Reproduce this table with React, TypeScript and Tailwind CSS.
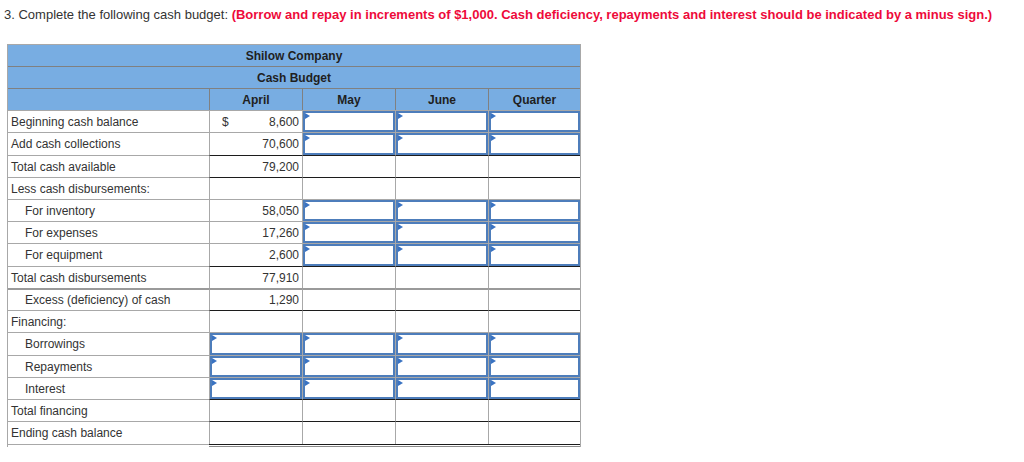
import React from "react";

type Top = "gray" | "black" | "thick";

interface Row {
  label: string;
  indent?: boolean;
  april?: string;
  dollar?: boolean;
  inputs: number; // 3 = May..Quarter, 4 = April..Quarter
  top: Top;
  h: string;
}

const rows: Row[] = [
  { label: "Beginning cash balance", april: "8,600", dollar: true, inputs: 3, top: "gray", h: "h-[22px]" },
  { label: "Add cash collections", april: "70,600", inputs: 3, top: "gray", h: "h-[23px]" },
  { label: "Total cash available", april: "79,200", inputs: 0, top: "black", h: "h-[22px]" },
  { label: "Less cash disbursements:", inputs: 0, top: "black", h: "h-[22px]" },
  { label: "For inventory", indent: true, april: "58,050", inputs: 3, top: "gray", h: "h-[22px]" },
  { label: "For expenses", indent: true, april: "17,260", inputs: 3, top: "gray", h: "h-[22px]" },
  { label: "For equipment", indent: true, april: "2,600", inputs: 3, top: "gray", h: "h-[23px]" },
  { label: "Total cash disbursements", april: "77,910", inputs: 0, top: "black", h: "h-[22px]" },
  { label: "Excess (deficiency) of cash", indent: true, april: "1,290", inputs: 0, top: "thick", h: "h-[22px]" },
  { label: "Financing:", inputs: 0, top: "black", h: "h-[22px]" },
  { label: "Borrowings", indent: true, inputs: 4, top: "gray", h: "h-[23px]" },
  { label: "Repayments", indent: true, inputs: 4, top: "gray", h: "h-[22px]" },
  { label: "Interest", indent: true, inputs: 4, top: "gray", h: "h-[22px]" },
  { label: "Total financing", inputs: 0, top: "black", h: "h-[22px]" },
  { label: "Ending cash balance", inputs: 0, top: "black", h: "h-[23px]" },
];

const numTop: Record<Top, string> = {
  gray: "border-t border-[#a8a8a8]",
  black: "border-t border-[#1c1c1c]",
  thick: "border-t-2 border-[#9a9a9a]",
};

function InputBox() {
  return (
    <div className="relative h-full w-full border-2 border-[#4d7dbb] bg-white">
      <div className="absolute left-0 top-0 h-0 w-0 border-y-[3px] border-l-[5px] border-y-transparent border-l-[#3a73c2]" />
    </div>
  );
}

function NumCell({ row, col }: { row: Row; col: number }) {
  const isInput = row.inputs === 4 || (row.inputs === 3 && col > 0);
  return (
    <div className={`${numTop[row.top]} border-l border-l-[#a8a8a8]`}>
      {isInput ? (
        <InputBox />
      ) : col === 0 && row.april ? (
        <div className="flex h-full items-center justify-between pl-[12px] pr-[3px]">
          <span>{row.dollar ? "$" : ""}</span>
          <span>{row.april}</span>
        </div>
      ) : null}
    </div>
  );
}

export default function App() {
  return (
    <div className="h-[462px] w-[1024px] bg-white font-['Liberation_Sans',Arial,sans-serif] text-[#333]">
      <p className="pl-[4px] pt-[7px] text-[13px] leading-[16px]">
        3. Complete the following cash budget:{" "}
        <span className="font-bold text-[#ee0a3a]">
          (Borrow and repay in increments of $1,000. Cash deficiency, repayments and interest should be indicated by a
          minus sign.)
        </span>
      </p>

      <div className="ml-[7px] mt-[21px] w-[574px] border-x border-[#a8a8a8] text-[12px] leading-[14px]">
        {/* header */}
        <div className="bg-[#78ade2] font-bold text-[#1f1f1f]">
          <div className="flex h-[22px] items-center justify-center border-t border-[#a8a8a8]">Shilow Company</div>
          <div className="flex h-[22px] items-center justify-center border-t border-[#808080]">Cash Budget</div>
          <div className="grid h-[22px] grid-cols-[201px_93px_93px_93px_92px] border-t border-[#808080]">
            <div />
            {["April", "May", "June", "Quarter"].map((m) => (
              <div key={m} className="flex items-center justify-center border-l border-[#808080]">
                {m}
              </div>
            ))}
          </div>
        </div>

        {rows.map((row) => (
          <div key={row.label} className={`grid ${row.h} grid-cols-[201px_93px_93px_93px_92px]`}>
            <div
              className={`flex items-center ${row.top === "thick" ? "border-t-2 border-[#9a9a9a]" : "border-t border-[#a8a8a8]"} ${
                row.indent ? "pl-[17px]" : "pl-[3px]"
              }`}
            >
              {row.label}
            </div>
            {[0, 1, 2, 3].map((c) => (
              <NumCell key={c} row={row} col={c} />
            ))}
          </div>
        ))}

        <div className="grid grid-cols-[201px_93px_93px_93px_92px]">
          <div className="border-t border-[#a8a8a8]" />
          <div className="col-span-4 h-[3px] border-y border-t-[#1c1c1c] border-b-[#8a8a8a]" />
        </div>
      </div>
    </div>
  );
}
